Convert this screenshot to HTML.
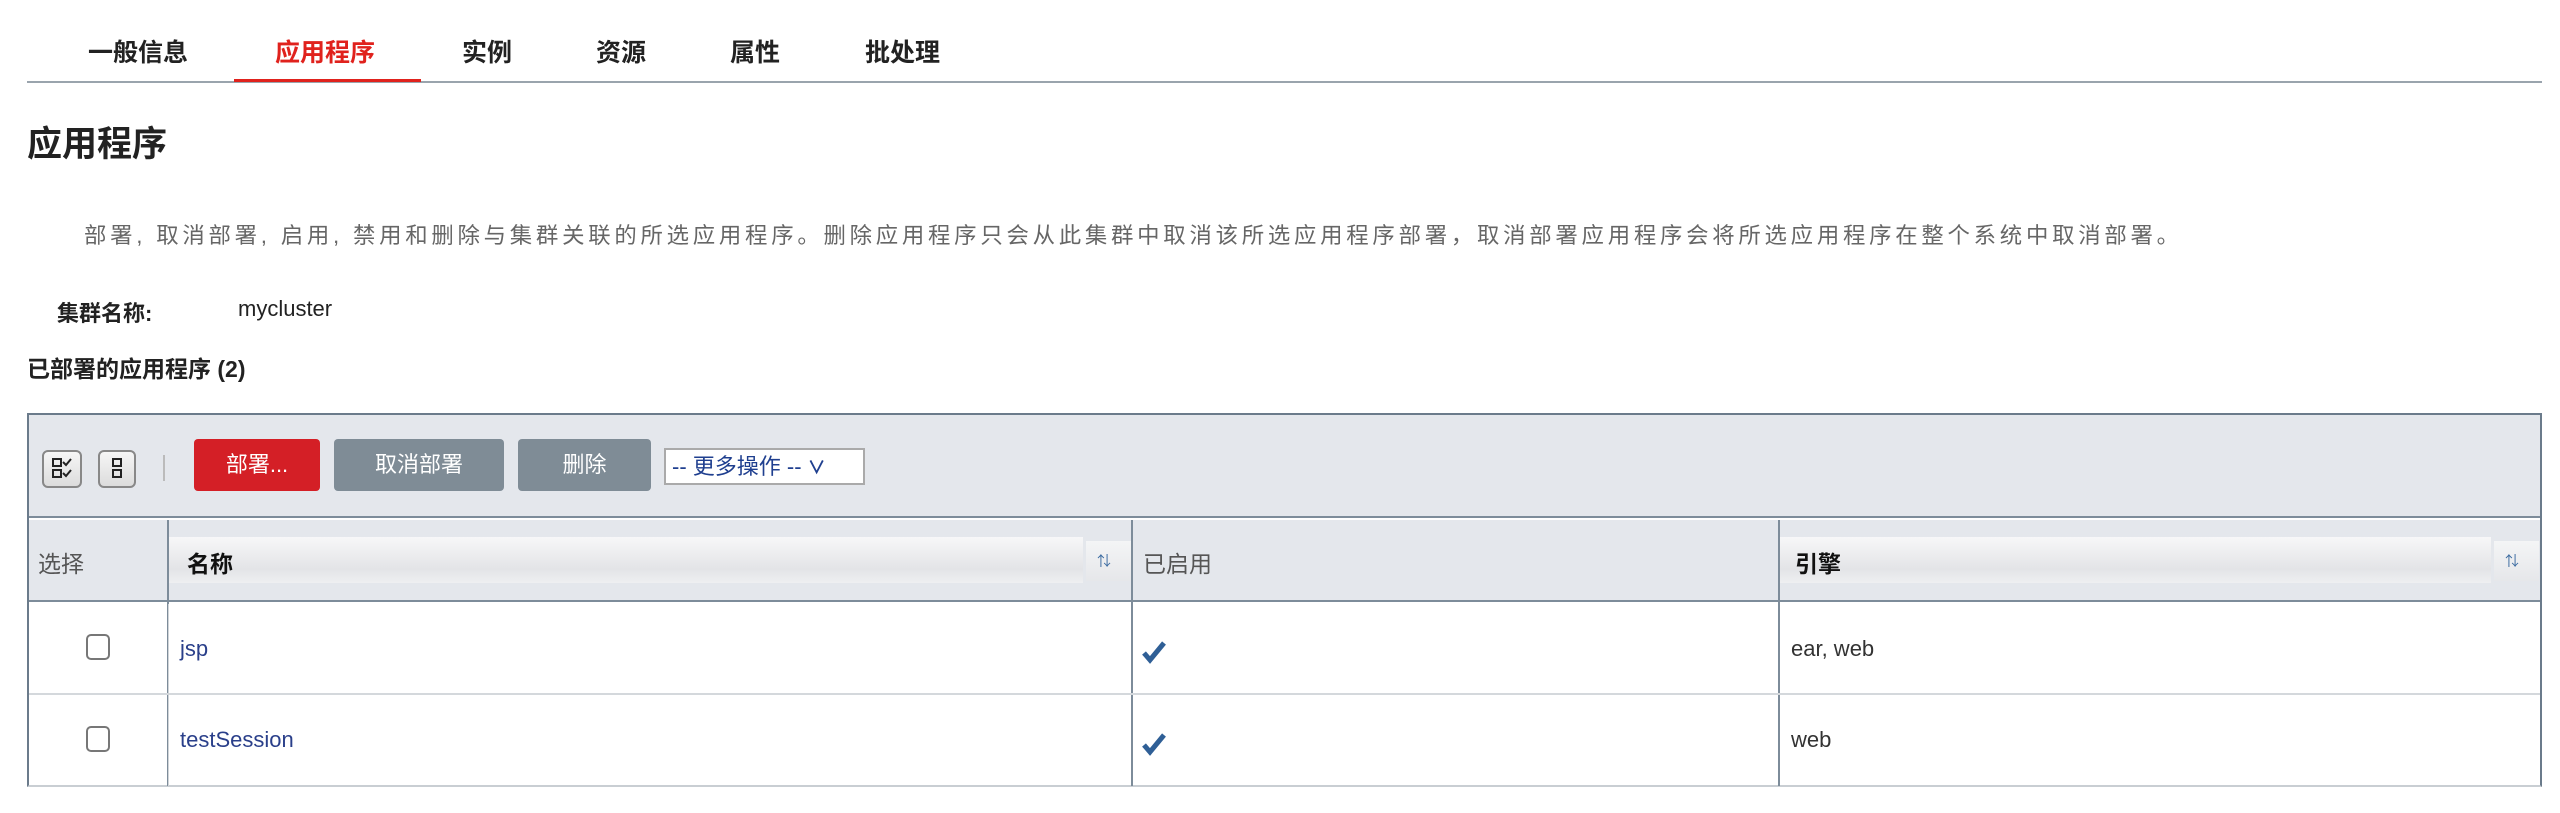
<!DOCTYPE html>
<html><head><meta charset="utf-8"><style>
*{margin:0;padding:0;box-sizing:border-box}
body{width:2560px;height:813px;background:#fff;position:relative;overflow:hidden;font-family:"Liberation Sans","Noto Sans CJK SC",sans-serif;color:#222}
.a{position:absolute;white-space:nowrap}
.tab{font-size:25px;font-weight:bold;top:33px;color:#222}
.btn{position:absolute;top:439px;height:52px;border-radius:4px;color:#fff;font-size:22px;line-height:52px;text-align:center}
.hb{position:absolute;top:537px;height:46px;background:linear-gradient(#f7f7f8,#e3e4e7 70%,#eeeff1);}
.sort{position:absolute;top:541px;height:40px;width:45px;background:linear-gradient(#f4f5f6,#e6e7ea)}
.cb{position:absolute;width:24px;height:26px;border:2px solid #777;border-radius:5px;background:#fff}
</style></head><body>
<div class="a tab" style="left:88px">一般信息</div>
<div class="a tab" style="left:275px;color:#e0221d">应用程序</div>
<div class="a tab" style="left:462px">实例</div>
<div class="a tab" style="left:596px">资源</div>
<div class="a tab" style="left:730px">属性</div>
<div class="a tab" style="left:865px">批处理</div>
<div class="a" style="left:27px;top:81px;width:2515px;height:2px;background:#9aa4ad"></div>
<div class="a" style="left:234px;top:79px;width:187px;height:3px;background:#e0221d"></div>
<div class="a" style="left:27px;top:116px;font-size:35px;font-weight:bold">应用程序</div>
<div class="a" style="left:84px;top:218px;font-size:22.4px;color:#666;letter-spacing:3.75px">部署, 取消部署, 启用, 禁用和删除与集群关联的所选应用程序。删除应用程序只会从此集群中取消该所选应用程序部署，取消部署应用程序会将所选应用程序在整个系统中取消部署。</div>
<div class="a" style="left:57px;top:296px;font-size:22px;font-weight:bold">集群名称:</div>
<div class="a" style="left:238px;top:296px;font-size:22px">mycluster</div>
<div class="a" style="left:27px;top:350px;font-size:23px;font-weight:bold">已部署的应用程序 (2)</div>

<div class="a" style="left:27px;top:413px;width:2515px;height:374px;border:2px solid #6b7b8b;border-bottom:2px solid #c9ced3;background:#fff"></div>
<div class="a" style="left:29px;top:415px;width:2511px;height:103px;background:#e4e7ec;border-bottom:2px solid #7d8c9a"></div>
<div class="a" style="left:42px;top:450px;width:40px;height:38px;border:2px solid #888;border-radius:6px;background:linear-gradient(#f6f6f6,#dcdcdc)"><svg width="36" height="34" viewBox="0 0 36 34"><rect x="9" y="7" width="8" height="7" fill="none" stroke="#222" stroke-width="2"/><rect x="9" y="18" width="8" height="7" fill="none" stroke="#222" stroke-width="2"/><path d="M19 10l3 3 5-6M19 21l3 3 5-6" fill="none" stroke="#222" stroke-width="2"/></svg></div>
<div class="a" style="left:98px;top:450px;width:38px;height:38px;border:2px solid #888;border-radius:6px;background:linear-gradient(#f6f6f6,#dcdcdc)"><svg width="34" height="34" viewBox="0 0 34 34"><rect x="13" y="7" width="8" height="7" fill="none" stroke="#222" stroke-width="2"/><rect x="13" y="18" width="8" height="7" fill="none" stroke="#222" stroke-width="2"/></svg></div>
<div class="a" style="left:163px;top:455px;width:2px;height:26px;background:#bbb"></div>
<div class="btn" style="left:194px;width:126px;background:#d41f26">部署...</div>
<div class="btn" style="left:334px;width:170px;background:#7f8c96">取消部署</div>
<div class="btn" style="left:518px;width:133px;background:#7f8c96">删除</div>
<div class="a" style="left:664px;top:448px;width:201px;height:37px;border:2px solid #aaa;background:#fff;color:#1f3f8f;font-size:22px;line-height:33px;padding-left:6px">-- 更多操作 -- <b style="font-size:18px">&#8744;</b></div>

<div class="a" style="left:29px;top:520px;width:2511px;height:82px;background:#e4e7ec;border-bottom:2px solid #7d8c9a"></div>
<div class="a" style="left:167px;top:520px;width:2px;height:266px;background:#7d8c9a"></div>
<div class="a" style="left:1131px;top:520px;width:2px;height:266px;background:#7d8c9a"></div>
<div class="a" style="left:1778px;top:520px;width:2px;height:266px;background:#7d8c9a"></div>
<div class="hb" style="left:169px;width:914px"></div><div class="sort" style="left:1086px"></div>
<div class="hb" style="left:1780px;width:711px"></div><div class="sort" style="left:2494px"></div>
<div class="a" style="left:38px;top:545px;font-size:23px;color:#555">选择</div>
<div class="a" style="left:187px;top:545px;font-size:23px;font-weight:bold;color:#111">名称</div>
<div class="a" style="left:1143px;top:545px;font-size:23px;color:#555">已启用</div>
<div class="a" style="left:1795px;top:545px;font-size:23px;font-weight:bold;color:#111">引擎</div>
<div class="a" style="left:1097px;top:551px;color:#3a6aa0;font-size:14px">⇅</div>
<div class="a" style="left:2505px;top:551px;color:#3a6aa0;font-size:14px">⇅</div>

<div class="a" style="left:29px;top:693px;width:2511px;height:2px;background:#d4d8dc"></div>
<div class="a" style="left:168px;top:604px;width:1px;height:182px;background:#d0d4d8"></div>
<div class="cb" style="left:86px;top:634px"></div>
<div class="cb" style="left:86px;top:726px"></div>
<div class="a" style="left:180px;top:636px;font-size:22px;color:#2a3f8a">jsp</div>
<div class="a" style="left:180px;top:727px;font-size:22px;color:#2a3f8a">testSession</div>
<svg class="a" style="left:1142px;top:640px" width="24" height="24" viewBox="0 0 24 24"><path d="M2 13l6 7L22 3" fill="none" stroke="#2f5f96" stroke-width="5"/></svg>
<svg class="a" style="left:1142px;top:732px" width="24" height="24" viewBox="0 0 24 24"><path d="M2 13l6 7L22 3" fill="none" stroke="#2f5f96" stroke-width="5"/></svg>
<div class="a" style="left:1791px;top:636px;font-size:22px;color:#333">ear, web</div>
<div class="a" style="left:1791px;top:727px;font-size:22px;color:#333">web</div>
</body></html>
